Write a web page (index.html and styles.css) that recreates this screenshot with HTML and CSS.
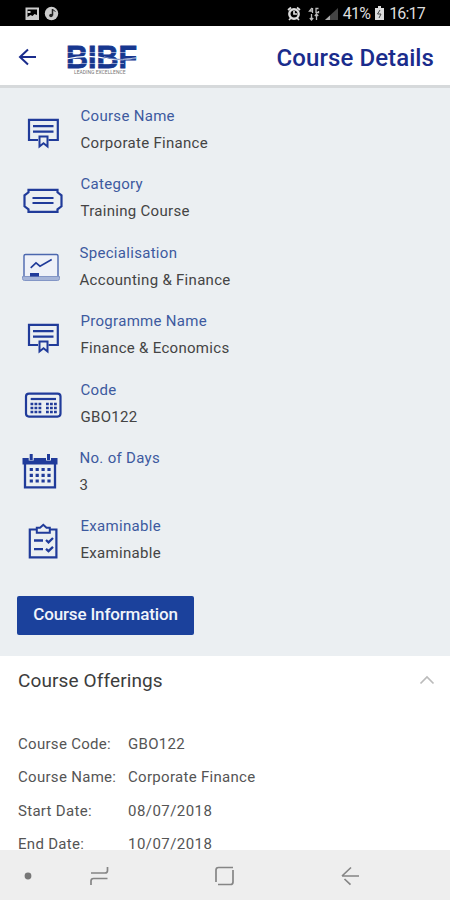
FILE: index.html
```html
<!DOCTYPE html>
<html lang="en">
<head>
<meta charset="utf-8">
<title>Course Details</title>
<link rel="stylesheet" href="styles.css">
</head>
<body>
<svg class="defs" width="0" height="0" aria-hidden="true">
  <symbol id="certificate" viewBox="0 0 46 46">
    <path d="M18 34H9V13.800h28.800V34H28.500M13 20.200h20.500M13 25.600h20.500" fill="none" stroke="currentColor" stroke-width="2.200"/>
    <path d="M19.500 30.500h8v10l-4-3.200-4 3.200z" fill="none" stroke="currentColor" stroke-width="2"/>
  </symbol>
</svg>
<div class="screen">
  <div class="status">
    <svg class="status-left" width="36" height="16" viewBox="0 0 36 16">
      <path fill="#ccc" fill-rule="evenodd" d="M1.500 1.500h13.500v12.500H1.500zM3.500 3.500v7.500l3-2 2 1 2-2 2.500 1V3.500z"/>
      <path fill="#ccc" d="M3.500 5h3v2h-3z"/>
      <circle cx="27.500" cy="7.500" r="6.700" fill="#ccc"/>
      <path d="M28.500 3v6.500" stroke="#222" stroke-width="1.500"/><circle cx="27" cy="9.500" r="1.800" fill="#222"/><path d="M28.500 3.500l3 2" stroke="#222"/>
    </svg>
    <div class="status-right">
      <svg width="52" height="16" viewBox="0 0 52 16">
        <circle cx="7" cy="8" r="4.700" fill="none" stroke="#ddd" stroke-width="2.400"/>
        <path d="M7 5v3h3M1 4l3-2.500M10 1.500L13 4M2 14l2-2M12 14l-2-2" fill="none" stroke="#ddd" stroke-width="1.700"/>
        <path d="M25 2l-2.500 3H26M25.500 2v5M31.500 2.500H29v4h2.500V5M24.500 8v6M22.800 12l1.700 2 1.700-2M29.500 14V8M27.800 10l1.700-2 1.700 2" fill="none" stroke="#bbb" stroke-width="1.300"/>
        <path d="M51 2v12H38z" fill="#444"/><path d="M43 9.500V14h-5z" fill="#aaa"/>
      </svg>
      <span class="battery">41%</span>
      <svg width="9" height="15" viewBox="0 0 9 15"><path fill="#ddd" d="M3 0h3v2h3v12H0V2h3z"/><path d="M5 4L2.500 8H6l-2 4" fill="none" stroke="#444"/></svg>
      <span class="clock">16:17</span>
    </div>
  </div>
  <header class="appbar">
    <svg class="back" width="20" height="18" viewBox="0 0 20 18"><path d="M18 9H2M10 1.500L2 9l8 7.500" fill="none" stroke="currentColor" stroke-width="2"/></svg>
    <div class="logo">
      <svg class="logo-mark" width="74" height="25" viewBox="0 0 74 25">
        <text class="logo-text" x="0" y="23.500" textLength="71" lengthAdjust="spacingAndGlyphs">BIBF</text>
        <path d="M0 8.500h62M0 19.500h58" stroke="#fff" stroke-width=".5"/>
        <path d="M0 15c17-4 31-3 43 0 9 2 17 0 27-1" fill="none" stroke="#fff" stroke-width="1.200"/>
        <path d="M38 12.500c11 4 20 3 32 2" fill="none" stroke="#7186bd" stroke-width="1"/>
      </svg>
      <span class="tagline">LEADING EXCELLENCE</span>
    </div>
    <h1 class="title">Course Details</h1>
  </header>
  <main class="details">
    <div class="row"><svg class="icon"><use href="#certificate"/></svg><dl><dt>Course Name</dt><dd>Corporate Finance</dd></dl></div>
    <div class="row"><svg class="icon" viewBox="0 0 46 46"><path d="M8.500 15.800h29v2.500l4 3v11l-4 3v2.500h-29v-2.500l-4-3v-11l4-3zM12.500 24h21M12.500 29h21" fill="none" stroke="currentColor" stroke-width="2.200"/></svg><dl><dt>Category</dt><dd>Training Course</dd></dl></div>
    <div class="row shifted"><svg class="icon" viewBox="0 0 46 46"><path d="M4 33V13q0-1.500 1.500-1.500h31q1.500 0 1.500 1.500v20" fill="#eef1f8" stroke="#4b67ae" stroke-width="1.400"/><path d="M2.500 33.500h37v2q0 2-2 2h-33q-2 0-2-2z" fill="#a5b4d8" stroke="#8396c6"/><path d="M10.700 24.900L16 19.900l4 3.300 11.700-6.700" fill="none" stroke="currentColor" stroke-width="1.600"/><path d="M10 30h9v3.500h-9z" fill="currentColor"/></svg><dl><dt>Specialisation</dt><dd>Accounting &amp; Finance</dd></dl></div>
    <div class="row"><svg class="icon"><use href="#certificate"/></svg><dl><dt>Programme Name</dt><dd>Finance &amp; Economics</dd></dl></div>
    <div class="row"><svg class="icon" viewBox="0 0 46 46"><rect x="6" y="13.600" width="34.500" height="23" rx="3" fill="none" stroke="currentColor" stroke-width="2.200"/><path d="M10.700 19H36" stroke="currentColor" stroke-width="2.200"/><path d="M10.500 24h11M26 24h11M10.500 28h11M26 28h11M10.500 32h11M26 32h11" stroke="currentColor" stroke-width="2.600" stroke-dasharray="2.800 1.200"/></svg><dl><dt>Code</dt><dd>GBO122</dd></dl></div>
    <div class="row shifted"><svg class="icon" viewBox="0 0 46 46"><path d="M5 15v24.300h30V15" fill="none" stroke="currentColor" stroke-width="2.300"/><path d="M2.500 10h35v6.500h-35z" fill="currentColor"/><path d="M11.200 6v6.500M28.500 6v6.500" stroke="#ebeff2" stroke-width="5"/><path d="M11.200 6v6M28.500 6v6" stroke="currentColor" stroke-width="3"/><path d="M9.700 21.500h21M9.700 27.300h21M9.700 33h21" stroke="currentColor" stroke-width="3.200" stroke-dasharray="3.200 2.700"/></svg><dl><dt>No. of Days</dt><dd>3</dd></dl></div>
    <div class="row"><svg class="icon" viewBox="0 0 46 46"><path d="M16 13.500H9.800v27.800h26.600V13.500H30" fill="none" stroke="currentColor" stroke-width="2.200"/><path d="M16.800 16.700v-5H20l3.300-2.900 3.200 2.900h3.300v5z" fill="none" stroke="currentColor" stroke-width="2"/><path d="M14 24.500h9M14 33.200h9M26 24l2.500 2.300 4.500-4.300M26 32.800l2.500 2.300 4.500-4.300" fill="none" stroke="currentColor" stroke-width="2.300"/></svg><dl><dt>Examinable</dt><dd>Examinable</dd></dl></div>
    <button class="button">Course Information</button>
  </main>
  <section class="offerings">
    <div class="offer-head"><h2>Course Offerings</h2><svg width="16" height="10" viewBox="0 0 16 10"><path d="M1.500 8.500L8 2l6.500 6.500" fill="none" stroke="#bbb" stroke-width="1.700"/></svg></div>
    <div class="pair"><span>Course Code:</span><span>GBO122</span></div>
    <div class="pair"><span>Course Name:</span><span>Corporate Finance</span></div>
    <div class="pair"><span>Start Date:</span><span class="date">08/07/2018</span></div>
    <div class="pair"><span>End Date:</span><span class="date">10/07/2018</span></div>
  </section>
  <nav class="navbar">
    <svg width="450" height="50" viewBox="0 0 450 50" fill="none" stroke="#858585" stroke-width="1.700">
      <circle cx="28" cy="26" r="3.400" fill="#777" stroke="none"/>
      <path d="M91 23h14q2.500 0 2.500-2.500V17M107.500 28.500H93.500Q91 28.500 91 31v4"/>
      <path d="M233 17.500h-14.500q-2.500 0-2.500 2.500v12M218 34.500h12.500q2.500 0 2.500-2.500V20"/>
      <path d="M359 26h-17M351 17.500L342 26M344.500 29l6 5.700"/>
    </svg>
  </nav>
</div>
</body>
</html>
```
FILE: styles.css
```css
* { box-sizing: border-box; }
body { margin: 0; font-family: Roboto, "Liberation Sans", sans-serif; background: #fff; }
.defs { display: block; }
.screen { width: 450px; height: 900px; display: flex; flex-direction: column; overflow: hidden; }
.status { height: 25.500px; flex: none; background: #000; color: #ddd; display: flex; justify-content: space-between; align-items: center; padding: 2px 25px 0 24px; }
.status-right { display: flex; align-items: center; font-size: 16px; }
.battery { margin: 0 5px 0 4px; letter-spacing: -.8px; }
.clock { margin-left: 5px; letter-spacing: -.8px; }
.appbar { height: 62.500px; flex: none; display: flex; align-items: center; padding: 3px 16px 0 18px; border-bottom: 3px solid #d6d9db; color: #1a2c8c; }
.back { flex: none; }
.logo { margin-left: 28px; width: 76px; display: flex; flex-direction: column; padding-top: 5px; }
.logo-mark { display: block; }
.logo-text { font: bold 31px "Liberation Sans", sans-serif; fill: #17378f; stroke: #17378f; stroke-width: .8; }
.tagline { font-size: 5px; line-height: 6px; color: #777; margin: 0 0 0 8px; white-space: nowrap; }
.title { margin: 2px 0 0 auto; font-size: 24px; font-weight: 500; letter-spacing: .08px; line-height: 30px; white-space: nowrap; }
.details { height: 568px; flex: none; background: #ebeff2; padding: 18px 17px 0; color: #1c3b98; }
.row { height: 68.400px; display: flex; padding-left: 3px; }
.icon { width: 46px; height: 46px; flex: none; color: #203b9a; }
dl { margin: 0 0 0 14.500px; font-size: 15px; line-height: 20px; letter-spacing: .3px; white-space: nowrap; }
.shifted dl { margin-left: 13.500px; }
dt { color: #3d5a9f; }
dd { margin: 7px 0 0; color: #444; }
.button { display: block; margin-top: 11px; width: 177px; height: 39px; padding: 0 0 2px; border: 0; border-radius: 2px; background: #1b419c; color: #f1f4fa; font: 500 17px Roboto, sans-serif; letter-spacing: -.15px; white-space: nowrap; }
.offerings { flex: 1; min-height: 0; overflow: hidden; background: #fff; padding: 12px 15px 0 18px; color: #555; }
.offer-head { height: 60px; display: flex; justify-content: space-between; }
.offer-head svg { margin-top: 7px; }
h2 { margin: 0; font-size: 19px; line-height: 25px; font-weight: 400; letter-spacing: .12px; color: #3c3c3c; }
.pair { height: 33.300px; display: grid; grid-template-columns: 110px 1fr; font-size: 15px; line-height: 33px; letter-spacing: .3px; white-space: nowrap; }
.date { letter-spacing: .45px; }
.navbar { height: 50px; flex: none; background: #eee; }
.navbar svg { display: block; }
```
